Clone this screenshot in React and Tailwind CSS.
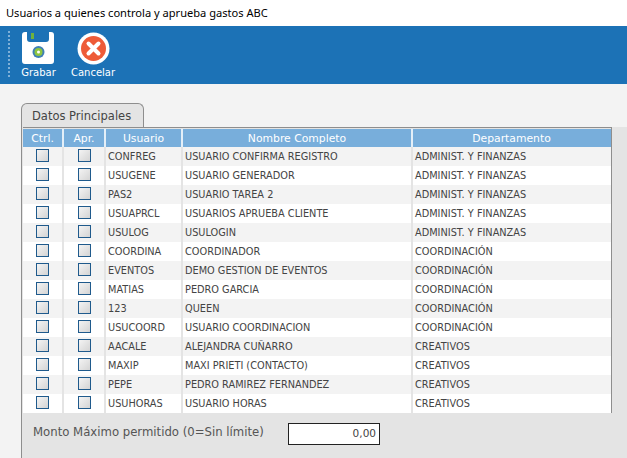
const rows = [
  ['CONFREG', 'USUARIO CONFIRMA REGISTRO', 'ADMINIST. Y FINANZAS'],
  ['USUGENE', 'USUARIO GENERADOR', 'ADMINIST. Y FINANZAS'],
  ['PAS2', 'USUARIO TAREA 2', 'ADMINIST. Y FINANZAS'],
  ['USUAPRCL', 'USUARIOS APRUEBA CLIENTE', 'ADMINIST. Y FINANZAS'],
  ['USULOG', 'USULOGIN', 'ADMINIST. Y FINANZAS'],
  ['COORDINA', 'COORDINADOR', 'COORDINACIÓN'],
  ['EVENTOS', 'DEMO GESTION DE EVENTOS', 'COORDINACIÓN'],
  ['MATIAS', 'PEDRO GARCIA', 'COORDINACIÓN'],
  ['123', 'QUEEN', 'COORDINACIÓN'],
  ['USUCOORD', 'USUARIO COORDINACION', 'COORDINACIÓN'],
  ['AACALE', 'ALEJANDRA CUÑARRO', 'CREATIVOS'],
  ['MAXIP', 'MAXI PRIETI (CONTACTO)', 'CREATIVOS'],
  ['PEPE', 'PEDRO RAMIREZ FERNANDEZ', 'CREATIVOS'],
  ['USUHORAS', 'USUARIO HORAS', 'CREATIVOS']
]

const cols = 'grid grid-cols-[41px_42px_77px_230px_197px]'

function Check() {
  return <div className="w-[13px] h-[13px] mb-[2px] border border-[#1f5a8c] bg-gradient-to-br from-[#f4f4f4] to-[#d4d4d4]" />
}

function SaveIcon() {
  return (
    <svg width="33" height="33" viewBox="0 0 33 33">
      <path d="M3 0H5V7Q5 10 8 10H24Q27 10 27 7V0H29Q32 0 32 3V29Q32 32 29 32H3Q0 32 0 29V3Q0 0 3 0Z" fill="#fff" />
      <rect x="9" y="1" width="3" height="6" fill="#6fb23e" />
      <circle cx="16.5" cy="20" r="6" fill="#3f7fb5" />
      <circle cx="16.5" cy="20" r="4" fill="#8dc63f" />
      <circle cx="16.5" cy="20" r="1.5" fill="#fff" />
    </svg>
  )
}

function CancelIcon() {
  return (
    <svg width="33" height="33" viewBox="0 0 33 33">
      <circle cx="16.5" cy="16.5" r="16" fill="#fff" />
      <circle cx="16.5" cy="16.5" r="12.5" fill="#ee5b38" />
      <path d="M11.5 11.5L21.5 21.5M21.5 11.5L11.5 21.5" stroke="#fff" strokeWidth="4" strokeLinecap="round" />
    </svg>
  )
}

export default function App() {
  return (
    <div className="w-[627px] h-[458px] overflow-hidden bg-[#f3f3f3] flex flex-col font-['DejaVu_Sans',sans-serif]">
      <div className="h-[26px] shrink-0 bg-white pl-[6px] flex items-center text-[11.1px] text-black font-['Noto_Sans',sans-serif]">
        Usuarios a quienes controla y aprueba gastos ABC
      </div>

      <div className="h-[58px] shrink-0 bg-[#1c72b6] flex items-start pl-[8px] pt-[6px] text-white text-[10px] leading-[14px]">
        <div className="w-0 h-[46px] -mt-px border-l-2 border-dotted border-[#7fb0d8]" />
        <div className="w-[49px] ml-[4px] flex flex-col items-center gap-[1px]">
          <SaveIcon />
          <span>Grabar</span>
        </div>
        <div className="w-[54px] ml-[3px] flex flex-col items-center gap-[1px]">
          <CancelIcon />
          <span>Cancelar</span>
        </div>
      </div>

      <div className="flex-1 pl-[21px] pt-[19px] flex flex-col">
        <div className="w-[123px] h-[25px] shrink-0 bg-[#e4e4e4] border border-b-0 border-[#8e8e8e] rounded-t-[6px] pl-[10px] pt-[2px] flex items-center text-[11.5px] text-[#444]">
          Datos Principales
        </div>
        <div className="flex-1 bg-[#e4e4e4] border-l border-[#8e8e8e] -mt-px">
          <div className="w-[589px] ml-px border-t border-[#8e8e8e]">
            <div className={`${cols} h-[19px] pt-px bg-[#78aedb] bg-clip-content border-r border-[#8e8e8e] text-white text-[10.8px] text-center leading-[20px]`}>
              <div className="border-r-2 border-white/80">Ctrl.</div>
              <div className="border-r-2 border-white/80">Apr.</div>
              <div className="border-r-2 border-white/80">Usuario</div>
              <div className="border-r-2 border-white/80">Nombre Completo</div>
              <div>Departamento</div>
            </div>
            <div className="text-[9.75px] text-[#444] border-r border-[#8e8e8e]">
              {rows.map((row, i) => (
                <div key={row[0]} className={`${cols} h-[19px] items-center ${i % 2 === 0 ? 'bg-[#f3f3f3]' : 'bg-white'}`}>
                  <div className="h-full flex items-center justify-center border-r-2 border-[#e4e4e4]"><Check /></div>
                  <div className="h-full flex items-center justify-center border-r-2 border-[#e4e4e4]"><Check /></div>
                  <div className="h-full flex items-center pl-[2px] pt-[2px] border-r-2 border-[#e4e4e4]">{row[0]}</div>
                  <div className="h-full flex items-center pl-[2px] pt-[2px] border-r-2 border-[#e4e4e4]">{row[1]}</div>
                  <div className="h-full flex items-center pl-[2px] pt-[2px]">{row[2]}</div>
                </div>
              ))}
            </div>
          </div>
          <div className="flex items-start pl-[11px] pt-[10px]">
            <span className="w-[255px] mt-[1px] text-[11.7px] text-[#555] leading-[16px]">Monto Máximo permitido (0=Sin límite)</span>
            <div className="w-[92px] h-[22px] bg-white border border-[#222] flex items-center justify-end pr-[3px] text-[10.5px] text-[#444]">0,00</div>
          </div>
        </div>
      </div>
    </div>
  )
}
